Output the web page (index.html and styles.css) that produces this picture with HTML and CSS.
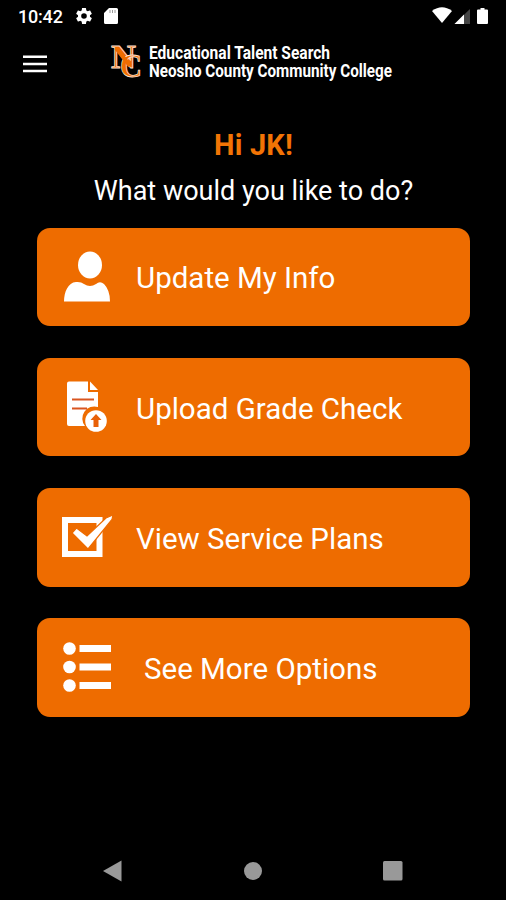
FILE: index.html
```html
<!DOCTYPE html>
<html lang="en">
<head>
    <meta charset="UTF-8">
    <meta name="viewport" content="width=device-width, initial-scale=1.0">
    <title>Educational Talent Search</title>
    <link rel="stylesheet" href="styles.css">
</head>
<body>
    <!-- Status bar -->
    <div class="status-bar">
        <span class="time">10:42</span>
        <svg class="gear" width="16" height="16" viewBox="2 2 20 20"><path fill="#fff" d="M19.43 12.98c.04-.32.07-.64.07-.98s-.03-.66-.07-.98l2.11-1.65c.19-.15.24-.42.12-.64l-2-3.46c-.12-.22-.39-.3-.61-.22l-2.49 1c-.52-.4-1.08-.73-1.69-.98l-.38-2.65A.49.49 0 0 0 14 2h-4c-.25 0-.46.18-.49.42l-.38 2.65c-.61.25-1.17.59-1.69.98l-2.49-1c-.23-.09-.49 0-.61.22l-2 3.46c-.13.22-.07.49.12.64l2.11 1.65c-.04.32-.07.65-.07.98s.03.66.07.98l-2.11 1.65c-.19.15-.24.42-.12.64l2 3.46c.12.22.39.3.61.22l2.49-1c.52.4 1.08.73 1.69.98l.38 2.65c.03.24.24.42.49.42h4c.25 0 .46-.18.49-.42l.38-2.65c.61-.25 1.17-.59 1.69-.98l2.49 1c.23.09.49 0 .61-.22l2-3.46c.12-.22.07-.49-.12-.64l-2.11-1.65zM12 15.5a3.5 3.5 0 1 1 0-7 3.5 3.5 0 0 1 0 7z"/></svg>
        <svg class="sd" width="14" height="16" viewBox="0 0 14 16"><path fill="#fff" d="M5 0h7.500a1.500 1.500 0 0 1 1.500 1.500v13a1.500 1.500 0 0 1-1.500 1.500h-11A1.500 1.500 0 0 1 0 14.500V5z"/><path stroke="#999" stroke-width="1" d="M6 2v3M8.500 2v3M11 2v3"/></svg>
        <svg class="signals" width="58" height="18" viewBox="0 0 58 18">
            <path fill="#fff" d="M0 4Q10-3.500 20 4L10 16z"/>
            <path fill="#444" d="M22.500 17L38 2v15z"/>
            <path fill="#fff" d="M22.500 17L32 7.500V17z"/>
            <path fill="#fff" d="M48.500 1h4v1.500H55a1 1 0 0 1 1 1V16a1 1 0 0 1-1 1h-9a1 1 0 0 1-1-1V3.500a1 1 0 0 1 1-1h2.500z"/>
        </svg>
    </div>

    <header>
        <svg class="menu" width="24" height="18" viewBox="0 0 24 18"><path stroke="#fff" stroke-width="2.600" d="M0 1.700h24M0 9h24M0 16h24"/></svg>
        <svg class="brand" width="284" height="40" viewBox="0 0 284 40">
            <g class="monogram">
                <text x="1" y="25" font-size="33" textLength="25" lengthAdjust="spacingAndGlyphs">N</text>
                <text x="10" y="34" font-size="34" textLength="22" lengthAdjust="spacingAndGlyphs">C</text>
            </g>
            <path stroke="#ee6c00" stroke-width="4" d="M6 5L20 23"/>
            <text class="brand-text" x="39" y="16" textLength="181" lengthAdjust="spacingAndGlyphs">Educational Talent Search</text>
            <text class="brand-text" x="39" y="34" textLength="243" lengthAdjust="spacingAndGlyphs">Neosho County Community College</text>
        </svg>
    </header>

    <main>
        <h1>Hi JK!</h1>
        <p class="question">What would you like to do?</p>

        <div class="options">
            <button class="option">
                <svg width="52" height="52" viewBox="0 0 52 52" fill="#fff"><ellipse cx="28" cy="14" rx="12" ry="13.500"/><path d="M2 50.500C2 41 6 31.500 14 31Q19 30.500 22 33Q28 37 34 33Q38 29.500 42 33Q48 39 48 50.500z"/></svg>
                <span>Update My Info</span>
            </button>
            <button class="option">
                <svg width="52" height="52" viewBox="0 0 52 52"><path fill="#fff" d="M7 .5h19V11h10v15a12 12 0 0 0-13 19H7a2 2 0 0 1-2-2V2.500a2 2 0 0 1 2-2z"/><path fill="#fff" d="M28 .5L36 9h-8z"/><path stroke="#d95520" stroke-width="2" d="M10 18.500h22M10 27.500h15"/><circle cx="34" cy="40" r="10.800" fill="#fff"/><path fill="#e86008" d="M34 33l5.500 6H36.500v7h-5v-7h-3z"/></svg>
                <span>Upload Grade Check</span>
            </button>
            <button class="option">
                <svg width="52" height="52" viewBox="0 0 52 52"><path fill="none" stroke="#fff" stroke-width="6" d="M3 9h34.500v34H3z"/><path fill="#fff" stroke="#ee6c00" stroke-width="1.200" d="M10 22L14.500 17L25 25L44 7L51 4L50 8.500L26 38z"/></svg>
                <span>View Service Plans</span>
            </button>
            <button class="option more">
                <svg width="52" height="52" viewBox="0 0 52 52" fill="#fff"><circle cx="7.500" cy="7.500" r="6.300"/><circle cx="7.500" cy="26" r="6.300"/><circle cx="7.500" cy="44.500" r="6.300"/><path d="M17.500 4h31.500v7h-31.500zM17.500 22.500h31.500v7h-31.500zM17.500 41h31.500v7h-31.500z"/></svg>
                <span>See More Options</span>
            </button>
        </div>
    </main>

    <!-- Android navigation -->
    <nav>
        <svg width="20" height="22" viewBox="0 0 20 22"><path fill="#999" d="M0 11L18.500.5v21z"/></svg>
        <svg width="18" height="18" viewBox="0 0 18 18"><circle cx="9" cy="9" r="9" fill="#999"/></svg>
        <svg width="20" height="20" viewBox="0 0 20 20"><rect width="19.500" height="19.500" rx="1.500" fill="#999"/></svg>
    </nav>
</body>
</html>
```
FILE: styles.css
```css
* {
    margin: 0;
    padding: 0;
    box-sizing: border-box;
}

body {
    height: 900px;
    display: flex;
    flex-direction: column;
    background-color: #000;
    color: #fff;
    font-family: Roboto, sans-serif;
    overflow: hidden;
}

svg {
    display: block;
    flex-shrink: 0;
}

.status-bar {
    display: flex;
    align-items: center;
    height: 32px;
    padding: 0 16px 0 18px;
}

.time {
    width: 58px;
    font-size: 18px;
    font-weight: 500;
    letter-spacing: -0.2px;
}

.sd {
    margin-left: 12px;
}

.signals {
    margin-left: auto;
}

header {
    display: flex;
    align-items: center;
    height: 64px;
    padding-left: 23px;
}

.brand {
    margin-left: 63px;
    margin-bottom: 2px;
    overflow: visible;
}

.monogram {
    font-family: "Liberation Serif", serif;
    font-weight: bold;
    fill: #ee6c00;
    stroke: #ffe0d0;
    stroke-width: 0.8px;
}

.brand-text {
    font-size: 18px;
    font-weight: bold;
    fill: #fff;
}

main {
    flex: 1;
    padding: 31px 36px 0 37px;
    text-align: center;
}

h1 {
    font-size: 29px;
    line-height: 36px;
    font-weight: bold;
    letter-spacing: 0.2px;
    color: #f27405;
}

.question {
    margin-top: 9px;
    font-size: 27px;
    line-height: 38px;
}

.options {
    display: flex;
    flex-direction: column;
    gap: 31.500px;
    margin-top: 17.500px;
}

.option {
    display: flex;
    align-items: center;
    height: 98.700px;
    padding: 3px 0 0 25px;
    border: none;
    border-radius: 13px;
    background-color: #ee6c00;
    color: #fff;
    font-family: inherit;
    font-size: 29.500px;
}

.option svg {
    margin-bottom: 3px;
}

.option span {
    margin-left: 22px;
}

.more span {
    margin-left: 30px;
}

nav {
    display: flex;
    align-items: center;
    justify-content: space-between;
    height: 58px;
    padding: 0 103px 0 103px;
}
```
